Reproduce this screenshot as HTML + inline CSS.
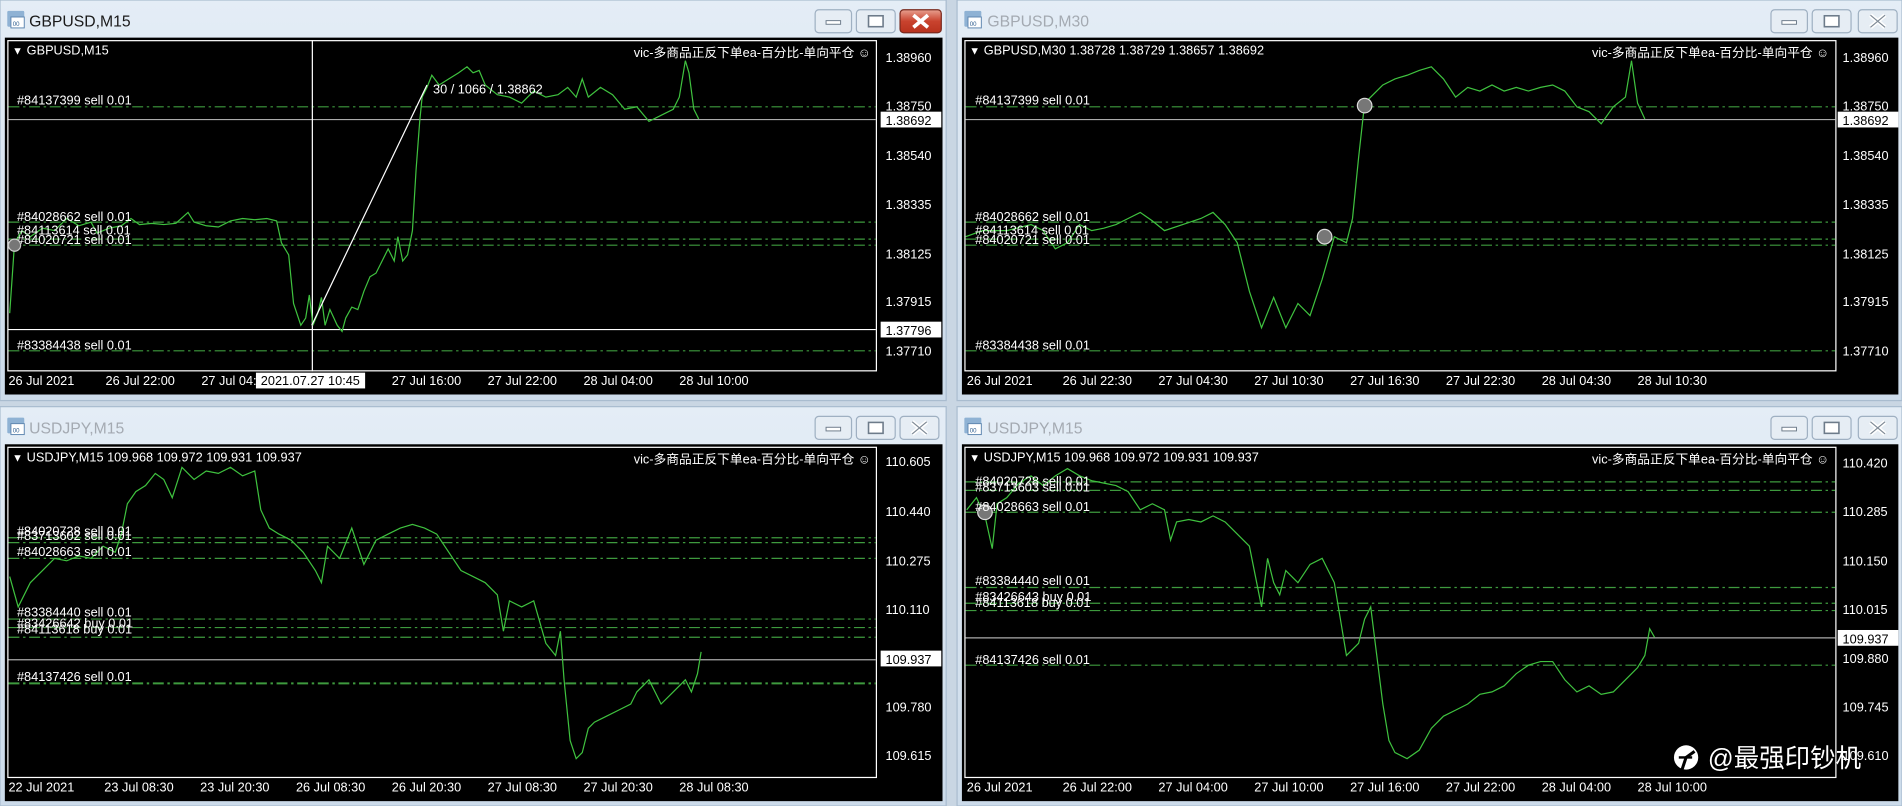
<!DOCTYPE html>
<html><head><meta charset="utf-8"><style>
html,body{margin:0;padding:0;background:#c9d6e3;overflow:hidden}
svg{display:block}
text{font-family:"Liberation Sans","Noto Sans CJK SC",sans-serif}
</style></head><body>
<svg width="1902" height="806" viewBox="0 0 1568 664" preserveAspectRatio="none" xmlns="http://www.w3.org/2000/svg">
<defs>
<linearGradient id="tb" x1="0" y1="0" x2="0" y2="1"><stop offset="0" stop-color="#e4edf6"/><stop offset="1" stop-color="#ccdbea"/></linearGradient>
<linearGradient id="cl" x1="0" y1="0" x2="0" y2="1"><stop offset="0" stop-color="#e8a090"/><stop offset="0.5" stop-color="#c9432e"/><stop offset="1" stop-color="#b8321e"/></linearGradient>
<g id="btn3">
 <rect x="0" y="0" width="30" height="19" rx="3" fill="#e6edf4" stroke="#9fb0c2"/>
 <rect x="34" y="0" width="32" height="19" rx="3" fill="#e6edf4" stroke="#9fb0c2"/>
 <rect x="9" y="9" width="12" height="3" fill="#fff" stroke="#6d7b8a" stroke-width="0.8"/>
 <rect x="44" y="5" width="12" height="9" fill="#fff" stroke="#6d7b8a" stroke-width="1.3"/>
</g>
<g id="ico"><rect x="0" y="0" width="14" height="13" rx="1" fill="#8fb2d4"/><rect x="3" y="5" width="11" height="9" fill="#fff" stroke="#5f87b0" stroke-width="0.8"/><text x="4.5" y="12.5" font-size="5" fill="#2a5a8c">00</text></g>
</defs>
<rect width="1568" height="664" fill="#c9d6e3"/>
<!-- window frames -->
<rect x="0" y="0" width="780" height="330" fill="url(#tb)" stroke="#a9bccf"/>
<rect x="789" y="0" width="779" height="330" fill="url(#tb)" stroke="#a9bccf"/>
<rect x="0" y="335" width="780" height="329" fill="url(#tb)" stroke="#a9bccf"/>
<rect x="789" y="335" width="779" height="329" fill="url(#tb)" stroke="#a9bccf"/>
<!-- titles -->
<use href="#ico" x="6" y="9"/><text x="24" y="22" font-size="13" fill="#1a1a1a">GBPUSD,M15</text>
<use href="#ico" x="795" y="9"/><text x="814" y="22" font-size="13" fill="#a4aab2">GBPUSD,M30</text>
<use href="#ico" x="6" y="344"/><text x="24" y="357" font-size="13" fill="#a4aab2">USDJPY,M15</text>
<use href="#ico" x="795" y="344"/><text x="814" y="357" font-size="13" fill="#a4aab2">USDJPY,M15</text>
<!-- buttons -->
<use href="#btn3" x="672" y="8"/><rect x="742" y="8" width="34" height="19" rx="3" fill="url(#cl)" stroke="#7a2a1e"/><path d="M753 12.5 L765 22.5 M765 12.5 L753 22.5" stroke="#fff" stroke-width="3"/>
<use href="#btn3" x="1460" y="8"/><rect x="1532" y="8" width="32" height="19" rx="3" fill="#e6edf4" stroke="#9fb0c2"/><path d="M1542 12.5 L1554 22.5 M1554 12.5 L1542 22.5" stroke="#fff" stroke-width="3.5"/><path d="M1542 12.5 L1554 22.5 M1554 12.5 L1542 22.5" stroke="#7f8a96" stroke-width="1"/>
<use href="#btn3" x="672" y="343"/><rect x="742" y="343" width="32" height="19" rx="3" fill="#e6edf4" stroke="#9fb0c2"/><path d="M752 347.5 L764 357.5 M764 347.5 L752 357.5" stroke="#fff" stroke-width="3.5"/><path d="M752 347.5 L764 357.5 M764 347.5 L752 357.5" stroke="#7f8a96" stroke-width="1"/>
<use href="#btn3" x="1460" y="343"/><rect x="1532" y="343" width="32" height="19" rx="3" fill="#e6edf4" stroke="#9fb0c2"/><path d="M1542 347.5 L1554 357.5 M1554 347.5 L1542 357.5" stroke="#fff" stroke-width="3.5"/><path d="M1542 347.5 L1554 357.5 M1554 347.5 L1542 357.5" stroke="#7f8a96" stroke-width="1"/>

<!-- black areas -->
<rect x="4" y="31" width="773" height="294" fill="#000"/>
<rect x="793" y="31" width="772" height="294" fill="#000"/>
<rect x="4" y="366" width="773" height="294" fill="#000"/>
<rect x="793" y="366" width="772" height="294" fill="#000"/>
<!-- plot frames -->
<g fill="none" stroke="#fff" stroke-width="1">
<rect x="6.5" y="33.5" width="716" height="272"/>
<rect x="795.5" y="33.5" width="718" height="272"/>
<rect x="6.5" y="368.5" width="716" height="272"/>
<rect x="795.5" y="368.5" width="718" height="272"/>
</g>

<g font-size="10.5" fill="#fff">
<!-- Panel 1 -->
<text x="10" y="45" font-size="9">▼</text><text x="22" y="45">GBPUSD,M15</text>
<text x="718" y="47" text-anchor="end">vic-多商品正反下单ea-百分比-单向平仓 ☺</text>
<g stroke="#3e9a3e" stroke-dasharray="9,3,2,3" stroke-width="1"><line x1="7" y1="88" x2="722" y2="88"/><line x1="7" y1="183" x2="722" y2="183"/><line x1="7" y1="197" x2="722" y2="197"/><line x1="7" y1="202" x2="722" y2="202"/><line x1="7" y1="289" x2="722" y2="289"/></g>
<line x1="7" y1="98.5" x2="722" y2="98.5" stroke="#aaa"/>
<line x1="7" y1="271.5" x2="722" y2="271.5" stroke="#fff"/>
<line x1="257.5" y1="33" x2="257.5" y2="306" stroke="#fff"/>
<polyline fill="none" stroke="#3fc23f" stroke-width="1" points="8,258 12,200 18,190 25,195 35,188 45,190 55,180 65,186 75,183 80,192 90,188 100,186 108,180 115,185 125,184 135,185 145,184 155,175 160,183 170,186 180,187 190,182 200,180 210,181 220,180 228,182 232,200 238,210 242,250 248,268 252,262 255,243 258,268 262,258 265,245 268,268 272,255 278,268 282,273 285,262 290,253 295,255 300,240 305,228 310,225 315,215 320,205 325,215 328,195 332,215 336,210 340,190 343,140 346,100 348,80 352,72 356,62 362,70 370,65 378,60 385,55 390,60 395,58 400,70 410,78 420,80 430,85 440,75 450,80 460,78 468,72 475,80 480,65 485,80 495,72 505,78 515,90 525,88 535,100 545,95 555,90 560,80 565,50 568,60 572,90 576,98"/>
<line x1="257" y1="268" x2="352" y2="70" stroke="#fff"/>
<text x="357" y="77">30 / 1066 / 1.38862</text>
<text x="14" y="86">#84137399 sell 0.01</text><text x="14" y="182">#84028662 sell 0.01</text><text x="14" y="193">#84113614 sell 0.01</text><text x="14" y="201">#84020721 sell 0.01</text><text x="14" y="288">#83384438 sell 0.01</text>
<circle cx="12" cy="202" r="5" fill="#777" stroke="#ccc"/>
<g><text x="730" y="51">1.38960</text><text x="730" y="91">1.38750</text><rect x="726" y="92" width="50" height="13" fill="#fff"/><text x="730" y="103" fill="#000">1.38692</text><text x="730" y="132">1.38540</text><text x="730" y="172">1.38335</text><text x="730" y="213">1.38125</text><text x="730" y="252">1.37915</text><rect x="726" y="265" width="50" height="13" fill="#fff"/><text x="730" y="276" fill="#000">1.37796</text><text x="730" y="293">1.37710</text></g>
<g><text x="7" y="317">26 Jul 2021</text><text x="87" y="317">26 Jul 22:00</text><text x="166" y="317">27 Jul 04:</text><rect x="211" y="307" width="90" height="13" fill="#fff"/><text x="215" y="317" fill="#000">2021.07.27 10:45</text><text x="323" y="317">27 Jul 16:00</text><text x="402" y="317">27 Jul 22:00</text><text x="481" y="317">28 Jul 04:00</text><text x="560" y="317">28 Jul 10:00</text></g>

<!-- Panel 2 -->
<text x="799" y="45" font-size="9">▼</text><text x="811" y="45">GBPUSD,M30  1.38728 1.38729 1.38657 1.38692</text>
<text x="1508" y="47" text-anchor="end">vic-多商品正反下单ea-百分比-单向平仓 ☺</text>
<g stroke="#3e9a3e" stroke-dasharray="9,3,2,3"><line x1="796" y1="88" x2="1513" y2="88"/><line x1="796" y1="183" x2="1513" y2="183"/><line x1="796" y1="197" x2="1513" y2="197"/><line x1="796" y1="202" x2="1513" y2="202"/><line x1="796" y1="289" x2="1513" y2="289"/></g>
<line x1="796" y1="98.5" x2="1513" y2="98.5" stroke="#aaa"/>
<polyline fill="none" stroke="#3fc23f" points="796,195 810,190 830,190 850,185 860,190 870,205 880,200 890,185 900,190 910,188 920,185 930,180 940,175 950,182 960,190 975,185 990,180 1000,175 1010,185 1020,200 1030,240 1040,270 1050,245 1060,270 1070,250 1080,260 1090,230 1100,195 1110,200 1115,180 1120,130 1125,85 1130,80 1140,70 1150,65 1160,62 1170,58 1180,55 1190,65 1200,80 1210,72 1220,75 1230,70 1240,75 1250,72 1260,75 1270,72 1280,70 1290,75 1300,88 1310,92 1320,102 1330,88 1340,80 1345,50 1350,85 1356,98"/>
<circle cx="1125" cy="87" r="6" fill="#777" stroke="#ddd"/><circle cx="1092" cy="195" r="6" fill="#777" stroke="#ddd"/>
<text x="804" y="86">#84137399 sell 0.01</text><text x="804" y="182">#84028662 sell 0.01</text><text x="804" y="193">#84113614 sell 0.01</text><text x="804" y="201">#84020721 sell 0.01</text><text x="804" y="288">#83384438 sell 0.01</text>
<g><text x="1519" y="51">1.38960</text><text x="1519" y="91">1.38750</text><rect x="1515" y="92" width="50" height="13" fill="#fff"/><text x="1519" y="103" fill="#000">1.38692</text><text x="1519" y="132">1.38540</text><text x="1519" y="172">1.38335</text><text x="1519" y="213">1.38125</text><text x="1519" y="252">1.37915</text><text x="1519" y="293">1.37710</text></g>
<g><text x="797" y="317">26 Jul 2021</text><text x="876" y="317">26 Jul 22:30</text><text x="955" y="317">27 Jul 04:30</text><text x="1034" y="317">27 Jul 10:30</text><text x="1113" y="317">27 Jul 16:30</text><text x="1192" y="317">27 Jul 22:30</text><text x="1271" y="317">28 Jul 04:30</text><text x="1350" y="317">28 Jul 10:30</text></g>

<!-- Panel 3 -->
<text x="10" y="380" font-size="9">▼</text><text x="22" y="380">USDJPY,M15  109.968 109.972 109.931 109.937</text>
<text x="718" y="382" text-anchor="end">vic-多商品正反下单ea-百分比-单向平仓 ☺</text>
<g stroke="#3e9a3e" stroke-dasharray="9,3,2,3"><line x1="7" y1="443" x2="722" y2="443"/><line x1="7" y1="447" x2="722" y2="447"/><line x1="7" y1="460" x2="722" y2="460"/><line x1="7" y1="510" x2="722" y2="510"/><line x1="7" y1="517" x2="722" y2="517"/><line x1="7" y1="525" x2="722" y2="525"/><line x1="7" y1="563" x2="722" y2="563" stroke-width="1.6"/></g>
<line x1="7" y1="543.5" x2="722" y2="543.5" stroke="#aaa"/>
<polyline fill="none" stroke="#3fc23f" points="8,475 15,500 25,480 35,470 45,460 55,462 65,458 75,460 85,450 95,455 100,440 105,415 112,405 120,400 128,390 135,395 142,410 150,385 160,395 170,388 180,390 190,385 200,392 210,388 215,420 222,435 230,440 240,445 250,455 260,470 265,480 270,450 280,460 290,435 300,465 310,445 320,440 330,435 340,432 350,435 360,440 370,455 380,470 390,475 400,480 410,490 415,520 420,495 430,500 440,495 450,530 458,540 462,520 465,560 470,610 475,625 480,620 485,600 490,595 500,590 510,585 520,580 525,570 535,560 545,580 555,570 565,560 570,570 575,555 578,537"/>
<text x="14" y="441">#84020728 sell 0.01</text><text x="14" y="445">#83713602 sell 0.01</text><text x="14" y="458">#84028663 sell 0.01</text><text x="14" y="508">#83384440 sell 0.01</text><text x="14" y="517">#83426642 buy 0.01</text><text x="14" y="522">#84113618 buy 0.01</text><text x="14" y="561">#84137426 sell 0.01</text>
<g><text x="730" y="384">110.605</text><text x="730" y="425">110.440</text><text x="730" y="466">110.275</text><text x="730" y="506">110.110</text><rect x="726" y="536" width="50" height="13" fill="#fff"/><text x="730" y="547" fill="#000">109.937</text><text x="730" y="586">109.780</text><text x="730" y="626">109.615</text></g>
<g><text x="7" y="652">22 Jul 2021</text><text x="86" y="652">23 Jul 08:30</text><text x="165" y="652">23 Jul 20:30</text><text x="244" y="652">26 Jul 08:30</text><text x="323" y="652">26 Jul 20:30</text><text x="402" y="652">27 Jul 08:30</text><text x="481" y="652">27 Jul 20:30</text><text x="560" y="652">28 Jul 08:30</text></g>

<!-- Panel 4 -->
<text x="799" y="380" font-size="9">▼</text><text x="811" y="380">USDJPY,M15  109.968 109.972 109.931 109.937</text>
<text x="1508" y="382" text-anchor="end">vic-多商品正反下单ea-百分比-单向平仓 ☺</text>
<g stroke="#3e9a3e" stroke-dasharray="9,3,2,3"><line x1="796" y1="397" x2="1513" y2="397"/><line x1="796" y1="404" x2="1513" y2="404"/><line x1="796" y1="422" x2="1513" y2="422"/><line x1="796" y1="484" x2="1513" y2="484"/><line x1="796" y1="497" x2="1513" y2="497"/><line x1="796" y1="503" x2="1513" y2="503"/><line x1="796" y1="548" x2="1513" y2="548"/></g>
<line x1="796" y1="525.5" x2="1513" y2="525.5" stroke="#aaa"/>
<polyline fill="none" stroke="#3fc23f" points="797,420 805,410 812,425 818,452 822,415 830,410 840,398 850,392 860,400 870,392 880,386 890,392 900,396 910,398 920,400 930,405 940,420 950,415 960,420 965,445 970,430 980,428 990,430 1000,425 1010,430 1020,440 1030,450 1040,500 1045,460 1050,480 1055,490 1060,470 1070,480 1080,465 1090,460 1100,480 1105,510 1110,540 1120,530 1125,510 1130,500 1135,540 1140,580 1145,610 1150,620 1160,625 1170,618 1180,600 1190,590 1200,585 1210,580 1220,572 1230,570 1240,565 1250,555 1260,548 1270,545 1280,545 1290,560 1300,570 1310,565 1320,572 1330,570 1340,560 1350,550 1356,540 1360,518 1364,525"/>
<circle cx="812" cy="422" r="6" fill="#777" stroke="#ddd"/>
<text x="804" y="400">#84020728 sell 0.01</text><text x="804" y="405">#83713603 sell 0.01</text><text x="804" y="421">#84028663 sell 0.01</text><text x="804" y="482">#83384440 sell 0.01</text><text x="804" y="495">#83426643 buy 0.01</text><text x="804" y="500">#84113618 buy 0.01</text><text x="804" y="547">#84137426 sell 0.01</text>
<g><text x="1519" y="385">110.420</text><text x="1519" y="425">110.285</text><text x="1519" y="466">110.150</text><text x="1519" y="506">110.015</text><rect x="1515" y="519" width="50" height="13" fill="#fff"/><text x="1519" y="530" fill="#000">109.937</text><text x="1519" y="546">109.880</text><text x="1519" y="586">109.745</text><text x="1519" y="626">109.610</text></g>
<g><text x="797" y="652">26 Jul 2021</text><text x="876" y="652">26 Jul 22:00</text><text x="955" y="652">27 Jul 04:00</text><text x="1034" y="652">27 Jul 10:00</text><text x="1113" y="652">27 Jul 16:00</text><text x="1192" y="652">27 Jul 22:00</text><text x="1271" y="652">28 Jul 04:00</text><text x="1350" y="652">28 Jul 10:00</text></g>
</g>
<!-- watermark -->
<circle cx="1390" cy="624" r="10" fill="#fff"/><path d="M1386 636 L1390 624 L1397 619" stroke="#000" stroke-width="2.5" fill="none"/><line x1="1384" y1="624" x2="1395" y2="624" stroke="#000" stroke-width="2"/>
<text x="1408" y="632" font-size="21" fill="#fff" font-family="Liberation Sans, Noto Sans CJK SC, sans-serif">@最强印钞机</text>
</svg>
</body></html>
